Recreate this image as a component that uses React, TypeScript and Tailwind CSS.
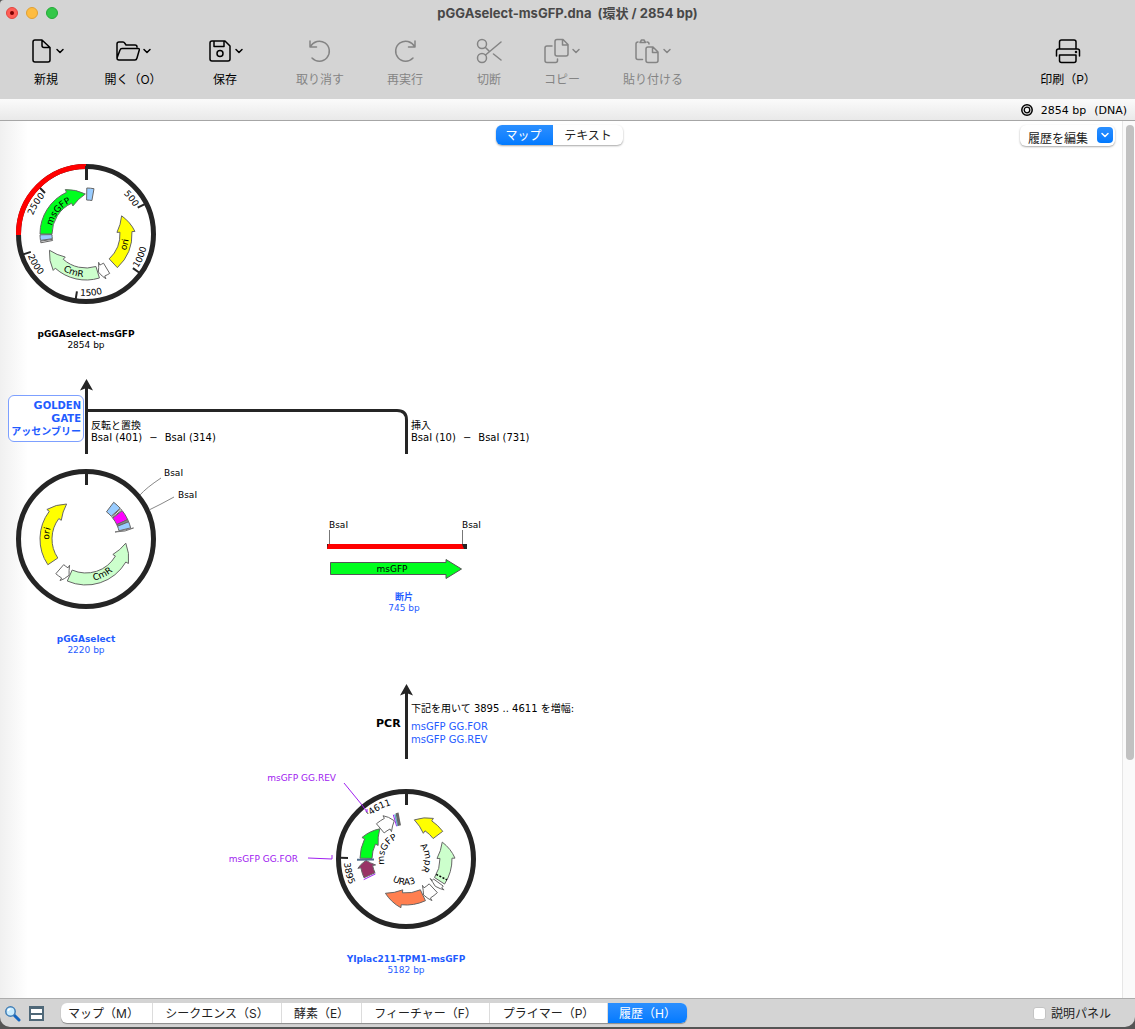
import React, { useId, useState } from 'react';
import { ChevronDown } from 'lucide-react';

const INK = '#252525';

interface Feature {
  from: number;
  to: number;
  head?: number;
  fill: string;
  stroke?: string;
}

interface RingLabel {
  text: string;
  angle: number;
  radius: number;
  flip?: boolean;
}

interface PlasmidProps {
  name: string;
  length: string;
  className: string;
  captionClass?: string;
  features: Feature[];
  labels: RingLabel[];
  ticks?: number[];
  children?: React.ReactNode;
}

// Angles are in degrees, clockwise from 12 o'clock
const pt = (angle: number, r: number) => {
  const a = (angle * Math.PI) / 180;
  return `${(r * Math.sin(a)).toFixed(2)} ${(-r * Math.cos(a)).toFixed(2)}`;
};

const featurePath = ({ from, to, head }: Feature) => {
  const cw = to > from ? 1 : 0;
  const end = head ?? to;
  const start = `M${pt(from, 34)}L${pt(from, 46)}A46 46 0 0 ${cw} ${pt(end, 46)}`;
  const back = `A34 34 0 0 ${1 - cw} ${pt(from, 34)}Z`;
  if (head === undefined) {
    return `${start}L${pt(to, 34)}${back}`;
  }
  const mid = (head + to) / 2;
  return `${start}L${pt(head, 49)}Q${pt(mid, 46)} ${pt(to, 40)}Q${pt(mid, 36)} ${pt(head, 31)}L${pt(head, 34)}${back}`;
};

const ArcText: React.FC<RingLabel> = ({ text, angle, radius, flip }) => {
  const id = useId();
  const a = flip ? angle + 80 : angle - 80;
  const b = flip ? angle - 80 : angle + 80;
  return (
    <>
      <path id={id} d={`M${pt(a, radius)}A${radius} ${radius} 0 0 ${flip ? 0 : 1} ${pt(b, radius)}`} fill="none" />
      <text fontSize="9" fill="#000" textAnchor="middle">
        <textPath href={`#${id}`} startOffset="50%">{text}</textPath>
      </text>
    </>
  );
};

const Plasmid: React.FC<PlasmidProps> = ({ name, length, className, captionClass = '', features, labels, ticks = [], children }) => (
  <figure className={`absolute w-[140px] ${className}`}>
    <svg viewBox="-70 -70 140 140" className="block w-full overflow-visible">
      <circle r="67.5" fill="none" stroke={INK} strokeWidth="5" />
      {ticks.map(t => (
        <path key={t} d={`M${pt(t, 58)}L${pt(t, 66)}`} stroke={INK} strokeWidth="2" />
      ))}
      {features.map((f, i) => (
        <path key={i} d={featurePath(f)} fill={f.fill} stroke={f.stroke ?? '#666'} strokeWidth="1" />
      ))}
      {children}
      <path d="M0.5 -68V-54" stroke={INK} strokeWidth="3" />
      {labels.map(l => (
        <ArcText key={l.text} {...l} />
      ))}
    </svg>
    <figcaption className={`mt-[25px] text-center text-[9px] leading-[11px] whitespace-nowrap ${captionClass}`}>
      <strong className="block font-bold">{name}</strong>
      {length}
    </figcaption>
  </figure>
);

const Digest = ({ title, left, right, className }: { title: string; left: string; right: string; className: string }) => (
  <div className={`absolute text-[10px] leading-3 whitespace-nowrap ${className}`}>
    <div>{title}</div>
    <div className="flex gap-[7px]">
      <span>BsaI ({left})</span>
      <span>−</span>
      <span>BsaI ({right})</span>
    </div>
  </div>
);

const productFeatures: Feature[] = [
  { from: 270, to: 359, head: 335, fill: '#00ff1e' },
  { from: 1, to: 10, fill: '#99ccff' },
  { from: 137, to: 63, head: 87, fill: '#ffff00' },
  { from: 149, to: 162, head: 156, fill: '#fff' },
  { from: 163, to: 246, head: 222, fill: '#ccffcc' },
  { from: 262, to: 269, fill: '#99ccff' },
  { from: 259, to: 261, fill: '#fff' }
];

const vectorFeatures: Feature[] = [
  { from: 236, to: 331, head: 307, fill: '#ffff00' },
  { from: 221, to: 205, head: 212, fill: '#fff' },
  { from: 204, to: 96, head: 120, fill: '#ccffcc' },
  { from: 37, to: 48, fill: '#99ccff' },
  { from: 49, to: 51, fill: '#fff' },
  { from: 52, to: 65, fill: '#ff00ff' },
  { from: 65, to: 68, fill: '#888' },
  { from: 68, to: 76, fill: '#99ccff' }
];

const templateFeatures: Feature[] = [
  { from: 53, to: 12, head: 34, fill: '#ffff00' },
  { from: 123, to: 65, head: 89, fill: '#ccffcc' },
  { from: 126, to: 133, head: 129, fill: '#fff' },
  { from: 137, to: 154, head: 148, fill: '#fff' },
  { from: 155, to: 211, head: 186, fill: '#ff7f50' },
  { from: 246, to: 268, head: 259, fill: '#993366' },
  { from: 271, to: 319, head: 296, fill: '#00ff1e' },
  { from: 320, to: 343, head: 332, fill: '#fff' }
];

const Connectors = () => (
  <svg className="absolute top-0 left-0 h-[700px] w-[600px]" fill="none">
    <g stroke={INK} strokeWidth="3">
      <path d="M86.5 333V264" />
      <path d="M86.5 289.500H397Q406.500 289.500 406.500 299V333" />
      <path d="M406.500 638V569" />
    </g>
    <path d="M86.500 258L93 269.500L86.500 267L80 269.500Z" fill={INK} />
    <path d="M406.500 563L413 574.500L406.500 572L400 574.500Z" fill={INK} />
  </svg>
);

const Fragment = () => (
  <figure className="absolute top-[398px] left-[327px] w-[154px] text-[9px]">
    <div className="flex h-[11px] justify-between pl-0.5 leading-[13px]">
      <span>BsaI</span>
      <span>BsaI</span>
    </div>
    <svg width="140" height="50" className="block">
      <path d="M2.500 0V15M135.500 0V15" stroke="#777" />
      <path d="M0 14h140v5H0z" fill={INK} />
      <path d="M1 14h134l2 5H0z" fill="#ff0000" />
      <path d="M3.500 32.500H119V29.500L134.500 39L119 48.500V44.500H3.500Z" fill="#00ff1e" stroke="#555" />
      <text x="65" y="42" fontSize="9" textAnchor="middle">msGFP</text>
    </svg>
    <figcaption className="mt-3 text-center leading-[11px] text-[#1f5cff]">
      <strong className="block font-bold">断片</strong>
      745 bp
    </figcaption>
  </figure>
);

const HistoryMap = () => (
  <div className="relative min-w-0 flex-1 overflow-hidden bg-white text-black [font-family:'DejaVu_Sans','Noto_Sans_CJK_JP',sans-serif]">
    <div className="absolute inset-y-0 left-0 w-7 bg-linear-to-r from-[#f0f0f0] to-white" />
    <Connectors />

    <Plasmid
      name="pGGAselect-msGFP"
      length="2854 bp"
      className="top-[43px] left-4"
      features={productFeatures}
      ticks={[63, 126, 189, 252, 315]}
      labels={[
        { text: '500', angle: 52, radius: 55 },
        { text: '1000', angle: 113, radius: 62, flip: true },
        { text: '1500', angle: 175, radius: 62, flip: true },
        { text: '2000', angle: 239, radius: 62, flip: true },
        { text: '2500', angle: 301, radius: 56 },
        { text: 'msGFP', angle: 309, radius: 35 },
        { text: 'ori', angle: 105, radius: 43, flip: true },
        { text: 'CmR', angle: 198, radius: 43, flip: true }
      ]}
    >
      <path d="M-67.500 1A67.500 67.500 0 0 1 0 -67.500" fill="none" stroke="#ff0000" strokeWidth="5" />
    </Plasmid>

    <a
      href="#golden-gate"
      className="absolute top-[274px] left-2 w-[76px] rounded-md border border-[#7da0ff] bg-white px-0.5 py-[3px] text-right text-[10px] leading-[13px] font-bold whitespace-nowrap text-[#1f5cff]"
    >
      <span className="block"><span className="text-[11px]">G</span>OLDEN</span>
      <span className="block"><span className="text-[11px]">G</span>ATE</span>
      <span className="block">アッセンブリー</span>
    </a>
    <Digest title="反転と置換" left="401" right="314" className="top-[299px] left-[91px]" />
    <Digest title="挿入" left="10" right="731" className="top-[299px] left-[411px]" />

    <Plasmid
      name="pGGAselect"
      length="2220 bp"
      className="top-[348px] left-4"
      captionClass="text-[#1f5cff]"
      features={vectorFeatures}
      labels={[
        { text: 'ori', angle: 278, radius: 37 },
        { text: 'CmR', angle: 155, radius: 42, flip: true }
      ]}
    >
      <path d="M29 -7L47.500 -11L39 -8Z" fill="#fff" stroke="#777" strokeWidth="1" />
      <g fill="none" stroke="#888" strokeWidth="1">
        <path d="M54 -44Q60 -51 75 -61" />
        <path d="M63 -29L75 -35L88 -42" />
      </g>
      <g fontSize="9">
        <text x="78" y="-63">BsaI</text>
        <text x="92" y="-41">BsaI</text>
      </g>
    </Plasmid>

    <Fragment />

    <strong className="absolute top-[596px] left-[376px] text-[11px] leading-[14px]">PCR</strong>
    <div className="absolute top-[581px] left-[411px] text-[10px] leading-[13px] whitespace-nowrap">
      <div className="mb-[5px]">下記を用いて 3895 .. 4611 を増幅:</div>
      <a href="#gg-for" className="block text-[#1f5cff]">msGFP GG.FOR</a>
      <a href="#gg-rev" className="block text-[#1f5cff]">msGFP GG.REV</a>
    </div>

    <Plasmid
      name="YIplac211-TPM1-msGFP"
      length="5182 bp"
      className="top-[668px] left-[336px]"
      captionClass="text-[#1f5cff]"
      features={templateFeatures}
      ticks={[271]}
      labels={[
        { text: '4611', angle: 333, radius: 56 },
        { text: '3895', angle: 256, radius: 62, flip: true },
        { text: 'msGFP', angle: 296, radius: 22 },
        { text: 'AmpR', angle: 87, radius: 19 },
        { text: 'URA3', angle: 185, radius: 26, flip: true }
      ]}
    >
      <path d={`M${pt(117, 34)}L${pt(117, 46)}`} stroke="#000" strokeWidth="1.500" strokeDasharray="2 1.500" />
      <path d={`M${pt(244, 34)}L${pt(244, 47)}`} stroke="#a020f0" strokeWidth="1" />
      <path d={`M${pt(269, 32)}L${pt(269, 49)}`} stroke="#4f6d8c" strokeWidth="2" />
      <path d={`M${pt(344, 34)}L${pt(344, 46)}`} stroke="#a020f0" strokeWidth="1" />
      <path d={`M${pt(346, 34)}L${pt(346, 46)}`} stroke="#5fa8c8" strokeWidth="1.500" />
      <path d={`M${pt(349, 34)}L${pt(349, 47)}`} stroke="#666" strokeWidth="3" />
      <path d={`M${pt(320, 59)}L${pt(320, 62)}`} stroke={INK} strokeWidth="1" />
      <g stroke="#a020f0" strokeWidth="1" fill="none">
        <path d="M-98 -1L-74 0V-4" />
        <path d="M-62 -76L-44 -54L-39 -47V-50" />
      </g>
      <g fontSize="9" fill="#a020f0" textAnchor="end">
        <text x="-70" y="-78">msGFP GG.REV</text>
        <text x="-108" y="3">msGFP GG.FOR</text>
      </g>
    </Plasmid>
  </div>
);

const Chevron = () => <ChevronDown className="-ml-0.5 h-3 w-3" strokeWidth={3} />;

const iconProps = {
  width: 26,
  height: 26,
  viewBox: '0 0 26 26',
  fill: 'none',
  stroke: 'currentColor',
  strokeWidth: 1.5,
  strokeLinecap: 'round',
  strokeLinejoin: 'round'
} as const;

const icons = {
  new: (
    <svg {...iconProps}>
      <path d="M8 2H15L23 9.500V22Q23 24 21 24H8Q6 24 6 22V4Q6 2 8 2ZM15 2V7.500Q15 9.500 17 9.500H23" />
    </svg>
  ),
  open: (
    <svg {...iconProps}>
      <path d="M3 20V6Q3 4 5 4H9Q10 4 11 5.500L12 7H21Q23 7 23 9M3 20L6 12Q6.500 10.500 8 10.500H24Q25.800 10.500 25.300 12L23 20Q22.500 22 21 22H5Q3 22 3 20Z" />
    </svg>
  ),
  save: (
    <svg {...iconProps}>
      <path d="M6 3H19L24 8V21Q24 23 22 23H6Q4 23 4 21V5Q4 3 6 3ZM8 3V8.500H18V3" />
      <circle cx="14" cy="15.500" r="3" />
    </svg>
  ),
  undo: (
    <svg {...iconProps}>
      <path d="M3 3V9H9.500M3.500 8.500A10 10 0 1 1 5 20" />
    </svg>
  ),
  redo: (
    <svg {...iconProps}>
      <path d="M23 3V9H16.500M22.500 8.500A10 10 0 1 0 21 20" />
    </svg>
  ),
  cut: (
    <svg {...iconProps}>
      <circle cx="6" cy="6" r="4.500" />
      <circle cx="6" cy="20" r="4.500" />
      <path d="M9.500 9.500L13 13M17.500 16L25 22M9.500 17L25 4" />
    </svg>
  ),
  copy: (
    <svg {...iconProps}>
      <path d="M14 1.500H20L25 6.500V16Q25 18 23 18H14Q12 18 12 16V3.500Q12 1.500 14 1.500ZM19.500 1.500V7H25M9 8H4Q2 8 2 10V22.500Q2 24.500 4 24.500H12.500Q14.500 24.500 14.500 22.500V21" />
    </svg>
  ),
  paste: (
    <svg {...iconProps}>
      <path d="M14 9H19L24 14V22.500Q24 24.500 22 24.500H14Q12 24.500 12 22.500V11Q12 9 14 9ZM18.500 9V14.500H24M8.500 21.500H4Q2 21.500 2 19.500V6Q2 4 4 4M13 4Q15 4 15 6M6 4.500H11.500L10 2H7.500Z" />
    </svg>
  ),
  print: (
    <svg {...iconProps}>
      <path d="M4.500 11V4Q4.500 2 6.500 2H19Q21 2 21 4V11M1.500 18V13Q1.500 11 3.500 11H22.500Q24.500 11 24.500 13V18M4.500 17H21V22.500Q21 24.500 19 24.500H6.500Q4.500 24.500 4.500 22.500Z" />
      <circle cx="21" cy="14" r=".5" />
    </svg>
  )
};

interface ToolProps {
  icon: keyof typeof icons;
  label: string;
  className: string;
  menu?: boolean;
  disabled?: boolean;
}

const tools: ToolProps[] = [
  { icon: 'new', label: '新規', className: 'w-[92px]', menu: true },
  { icon: 'open', label: '開く（O）', className: 'w-[78px] pl-1', menu: true },
  { icon: 'save', label: '保存', className: 'w-[110px]', menu: true },
  { icon: 'undo', label: '取り消す', className: 'w-[80px]', disabled: true },
  { icon: 'redo', label: '再実行', className: 'w-[90px]', disabled: true },
  { icon: 'cut', label: '切断', className: 'w-[78px]', disabled: true },
  { icon: 'copy', label: 'コピー', className: 'w-[68px]', menu: true, disabled: true },
  { icon: 'paste', label: '貼り付ける', className: 'w-[114px]', menu: true, disabled: true },
  { icon: 'print', label: '印刷（P）', className: 'ml-auto w-[134px]' }
];

const Tool: React.FC<ToolProps> = ({ icon, label, className, menu, disabled }) => (
  <button
    disabled={disabled}
    className={`flex flex-col items-center gap-1.5 text-xs whitespace-nowrap text-black disabled:text-[#848484] ${className}`}
  >
    <span className="flex items-center gap-[3px]">
      {icons[icon]}
      {menu && <Chevron />}
    </span>
    <span className="leading-5">{label}</span>
  </button>
);

const viewTabs = [
  { label: 'マップ（M）', className: 'w-[92px] pr-1.5' },
  { label: 'シークエンス（S）', className: 'w-[129px]' },
  { label: '酵素（E）', className: 'w-[80px]' },
  { label: 'フィーチャー（F）', className: 'w-[128px]' },
  { label: 'プライマー（P）', className: 'w-[118px]' },
  { label: '履歴（H）', className: 'w-[79px]' }
];

const App: React.FC = () => {
  const [mode, setMode] = useState('マップ');
  const [view, setView] = useState('履歴（H）');

  return (
    <div className="flex h-screen flex-col bg-[#555] pb-0.5 [font-family:Inter,'Noto_Sans_CJK_JP',sans-serif]">
      <div className="flex min-h-0 flex-1 flex-col overflow-hidden rounded-tl-[4px] rounded-b-[10px] bg-[#d4d4d4]">
        {/* Title bar */}
        <header className="relative h-[99px] shrink-0">
          <div className="absolute top-[7px] left-1.5 flex gap-2">
            <button aria-label="Close" className="flex h-3 w-3 items-center justify-center rounded-full border border-[#e2463f] bg-[#ff5f57]">
              <span className="h-1 w-1 rounded-full bg-[#7a0000]" />
            </button>
            <button aria-label="Minimize" className="h-3 w-3 rounded-full border border-[#e0a033] bg-[#febc40]" />
            <button aria-label="Zoom" className="h-3 w-3 rounded-full border border-[#24a938] bg-[#33c748]" />
          </div>
          <h1 className="pt-[3px] text-center text-[13px] leading-5 font-bold whitespace-pre text-[#484848]">pGGAselect-msGFP.dna  (環状 / 2854 bp)</h1>
          <div className="flex pt-[15px]">
            {tools.map(t => (
              <Tool key={t.label} {...t} />
            ))}
          </div>
        </header>

        {/* Sequence status */}
        <div className="flex h-[22px] shrink-0 items-center justify-end border-b border-[#a6a6a6] bg-linear-to-b from-[#fbfbfb] to-[#e9e9e9] pr-2 text-[11px] leading-5 text-black [font-family:'DejaVu_Sans',sans-serif]">
          <svg width="12" height="12" className="mr-2" fill="none" stroke="#000">
            <circle cx="6" cy="6" r="5.200" strokeWidth="1.500" />
            <circle cx="6" cy="6" r="2.800" strokeWidth="1.300" />
          </svg>
          <span className="mr-2 pt-0.5">2854 bp</span>
          <span className="pt-0.5">(DNA)</span>
        </div>

        <main className="relative flex min-h-0 flex-1">
          <HistoryMap />
          <div className="absolute top-1 left-[496px] flex h-5 rounded-md bg-white text-xs shadow-[0_1px_2px_rgba(0,0,0,0.35)]">
            {['マップ', 'テキスト'].map(m => (
              <button
                key={m}
                onClick={() => setMode(m)}
                className={`leading-[21px] first:w-[57px] first:rounded-l-md first:pr-0.5 last:w-[70px] last:rounded-r-md ${mode === m ? 'bg-linear-to-b from-[#2a8fff] to-[#007aff] text-white' : 'text-[#222]'}`}
              >
                {m}
              </button>
            ))}
          </div>
          <div className="absolute top-1 right-5 h-[21px] w-[95px] rounded-md bg-white shadow-[0_1px_2px_rgba(0,0,0,0.35)]">
            <select aria-label="履歴を編集" className="h-full w-full appearance-none bg-transparent pb-1 pl-2 text-xs text-[#222]">
              <option>履歴を編集</option>
            </select>
            <span className="pointer-events-none absolute top-0.5 right-0.5 flex h-4 w-4 items-center justify-center rounded bg-linear-to-b from-[#2a8fff] to-[#007aff] text-white">
              <ChevronDown className="h-3 w-3" strokeWidth={3} />
            </span>
          </div>
          <div className="w-[13px] shrink-0 border-l border-[#e6e6e6] bg-[#fafafa] pt-1 pl-[3px]">
            <div className="h-[635px] w-2 rounded-full bg-[#c1c1c1]" />
          </div>
        </main>

        {/* View tabs */}
        <footer className="flex h-[29px] shrink-0 items-center border-t border-[#acacac] pr-6 pl-1 text-xs text-[#222]">
          <button aria-label="検索">
            <svg width="17" height="17" fill="none">
              <path d="M10 10L15 15" stroke="#1465c0" strokeWidth="3" strokeLinecap="round" />
              <circle cx="6.500" cy="6.500" r="4.700" fill="#c9ecff" stroke="#3f7db5" strokeWidth="1.500" />
              <path d="M4 6Q4.500 4 6.500 4" stroke="#fff" strokeWidth="1.500" />
            </svg>
          </button>
          <button aria-label="分割表示" className="ml-2">
            <svg width="15" height="15">
              <path d="M0 0H15V15H0Z" fill="#4f6878" />
              <path d="M2 3H13V7H2ZM2 9H13V13H2Z" fill="#fff" />
            </svg>
          </button>
          <nav className="ml-[17px] flex h-5 divide-x divide-[#dcdcdc] rounded-md bg-white shadow-[0_1px_1px_rgba(0,0,0,0.35)]">
            {viewTabs.map(t => (
              <button
                key={t.label}
                onClick={() => setView(t.label)}
                className={`leading-[21px] whitespace-nowrap last:rounded-r-md ${t.className} ${view === t.label ? 'bg-linear-to-b from-[#2a8fff] to-[#007aff] text-white' : ''}`}
              >
                {t.label}
              </button>
            ))}
          </nav>
          <label className="ml-auto flex items-center gap-[5px]">
            <input type="checkbox" className="h-[13px] w-[13px] appearance-none rounded-[3px] border border-[#c4c4c4] bg-white" />
            <span className="pt-px">説明パネル</span>
          </label>
        </footer>
      </div>
    </div>
  );
};

export default App;
